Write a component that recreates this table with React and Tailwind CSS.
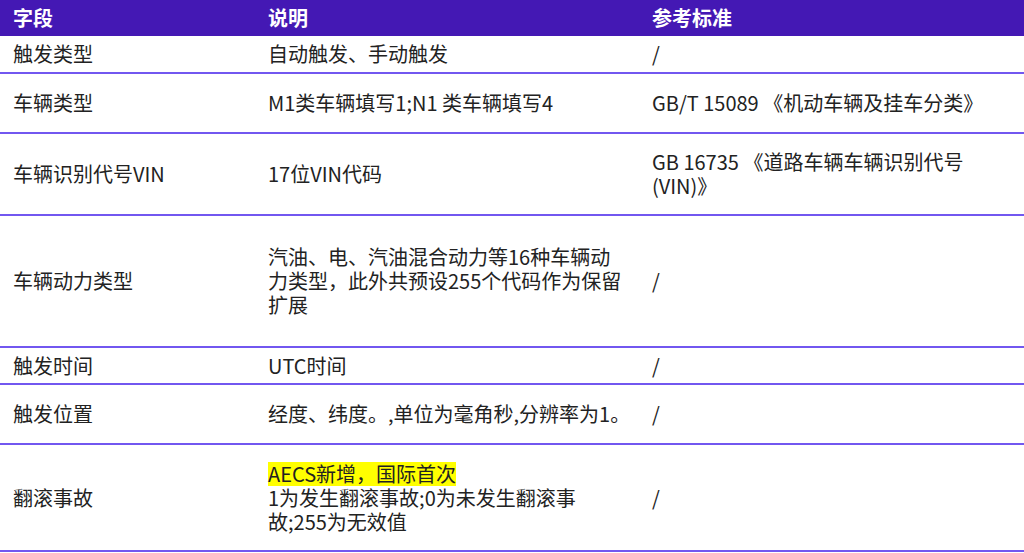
const rows = [
  { h: "h-[38px]", name: "触发类型", desc: ["自动触发、手动触发"], std: ["/"] },
  { h: "h-[60px]", name: "车辆类型", desc: ["M1类车辆填写1;N1 类车辆填写4"], std: ["GB/T 15089 《机动车辆及挂车分类》"] },
  { h: "h-[82px]", name: "车辆识别代号VIN", desc: ["17位VIN代码"], std: ["GB 16735 《道路车辆车辆识别代号", "(VIN)》"] },
  {
    h: "h-[132px]",
    name: "车辆动力类型",
    desc: ["汽油、电、汽油混合动力等16种车辆动", "力类型，此外共预设255个代码作为保留", "扩展"],
    std: ["/"],
  },
  { h: "h-[37px]", name: "触发时间", desc: ["UTC时间"], std: ["/"] },
  { h: "h-[60px]", name: "触发位置", desc: ["经度、纬度。,单位为毫角秒,分辨率为1。"], std: ["/"] },
  {
    h: "h-[107px]",
    name: "翻滚事故",
    highlight: "AECS新增，国际首次",
    desc: ["1为发生翻滚事故;0为未发生翻滚事", "故;255为无效值"],
    std: ["/"],
  },
];

export default function App() {
  return (
    <div
      className="w-[1024px] h-[553px] bg-white overflow-hidden text-[20px] leading-6 text-[#222]"
      style={{ fontFamily: '"Noto Sans CJK SC", "Noto Sans", sans-serif' }}
    >
      {/* header */}
      <div className="grid grid-cols-[255px_384px_1fr] h-[36px] items-center bg-[#4418b4] text-white font-semibold">
        <div className="pl-[13px]">字段</div>
        <div className="pl-[13px]">说明</div>
        <div className="pl-[13px]">参考标准</div>
      </div>

      {rows.map((r) => (
        <div
          key={r.name}
          className={`grid grid-cols-[255px_384px_1fr] items-center border-b-2 border-[#7257f0] ${r.h}`}
        >
          <div className="pl-[13px] pr-4">{r.name}</div>
          <div className="pl-[13px] whitespace-nowrap">
            {r.highlight && <div className="w-fit h-6 bg-[#ffff00]">{r.highlight}</div>}
            {r.desc.map((d) => (
              <div key={d}>{d}</div>
            ))}
          </div>
          <div className="pl-[13px] whitespace-nowrap">
            {r.std.map((s) => (
              <div key={s}>{s}</div>
            ))}
          </div>
        </div>
      ))}
    </div>
  );
}
